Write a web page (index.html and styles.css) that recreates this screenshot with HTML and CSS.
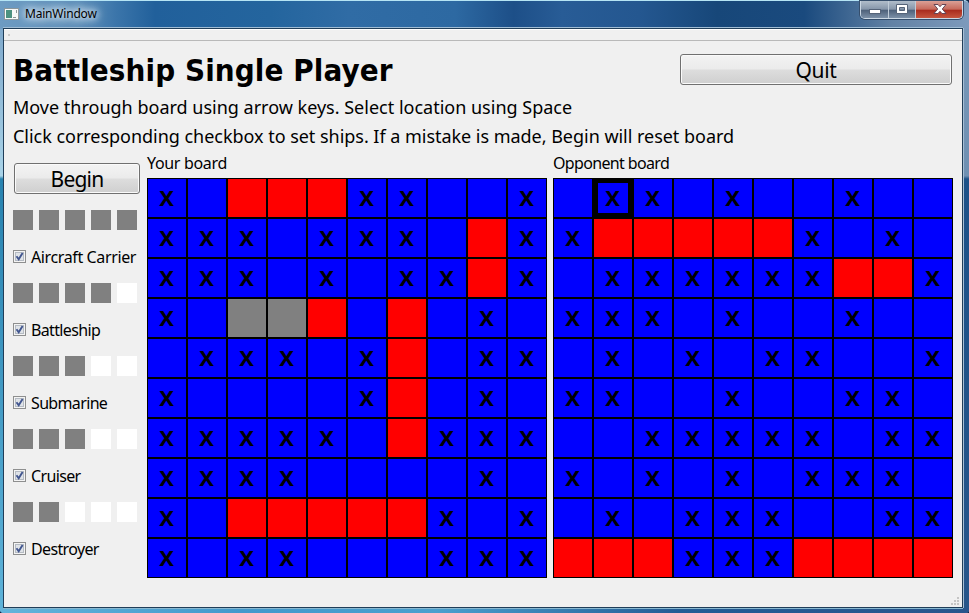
FILE: index.html
```
<!DOCTYPE html>
<html lang="en">
<head>
<meta charset="utf-8">
<title>MainWindow</title>
<link rel="stylesheet" href="styles.css">
</head>
<body>
<div class="window">
  <header class="titlebar">
    <svg class="app-icon" width="15" height="12" viewBox="0 0 15 12"><rect x=".5" y=".5" width="14" height="11" fill="#f7f9f8" stroke="#8b969a"/><rect x="2" y="2" width="6" height="8" fill="#4c9280"/><path d="M9 9.5h3M12.5 2v3" stroke="#8b9696"/></svg>
    <span class="window-name">MainWindow</span>
    <div class="controls">
      <span class="control minimize"><svg width="27" height="18"><rect x="8.5" y="9.5" width="11" height="4" fill="#fff" stroke="#566479"/></svg></span>
      <span class="control maximize"><svg width="26" height="18"><path fill-rule="evenodd" d="M7.500 4.500h11v9h-11zM10.500 7.500h5v3h-5z" fill="#fff" stroke="#566479"/></svg></span>
      <span class="control close"><svg width="47" height="18"><path d="M18 4.500h4l2 2.200 2-2.200h4l-3.700 4.500 3.700 4.500h-4l-2-2.200-2 2.200h-4l3.700-4.500z" fill="#fff" stroke="#664454"/></svg></span>
    </div>
  </header>
  <main class="client">
    <div class="toolbar"><i></i></div>
    <div class="content">
      <div class="heading"><h1>Battleship Single Player</h1><button class="quit">Quit</button></div>
      <p class="help">Move through board using arrow keys. Select location using Space</p>
      <p class="help click">Click corresponding checkbox to set ships. If a mistake is made, Begin will reset board</p>
      <div class="game">
        <aside class="fleet">
          <button class="begin">Begin</button>
          <div id="ships"></div>
        </aside>
        <section class="side own"><h2>Your board</h2><div class="board" id="own"></div></section>
        <section class="side opponent"><h2>Opponent board</h2><div class="board" id="opponent"></div></section>
      </div>
    </div>
    <svg class="grip" width="8" height="8"><path d="M6 0h2v2H6zM3 3h2v2H3zM6 3h2v2H6zM0 6h2v2H0zM3 6h2v2H3zM6 6h2v2H6z" fill="#c5c5c5"/></svg>
  </main>
</div>
<script src="game.js"></script>
</body>
</html>
```
FILE: styles.css
```
* { box-sizing: border-box; }
body { margin: 0; overflow: hidden; background: #10284b; color: #000; font-family: "Noto Sans", sans-serif; }
h1, h2, p { margin: 0; font-weight: normal; white-space: nowrap; }
.window {
  width: 969px; height: 613px; padding: 0 6px 5px 3px; display: flex; flex-direction: column;
  border-top: 1px solid #b5e4f4; border-radius: 0 5px 4px 4px;
  background:
    linear-gradient(90deg, #64b4da 0, #4399cc 25%, #4ba0ce 45%, #245c95 70%, #28558c) 0 100% / 100% 5px no-repeat,
    linear-gradient(180deg, #7898b8 0, #6f90b2 24%, #1d5288 24.5%, #28568a) 100% 28px / 6px 100% no-repeat,
    linear-gradient(180deg, #7fa9cc 0, #a9d3e8 24%, #2883b0 24.5%, #62b6dc) 0 28px / 3px 100% no-repeat,
    linear-gradient(90deg, #6d9bc2 0, #5f90ba 8%, #3b75aa 12%, #21609b 16%, #24659e 28%, #306ca5 36%, #2d69a2 47%, #1d4f88 53%, #285c96 58%, #245790 66%, #174779 74%, #1a4a7e 83%, #6282a5 92%, #7d9abc);
}
.titlebar { height: 27px; flex: none; display: flex; align-items: flex-start; }
.app-icon { margin: 7px 6px 0 1px; }
.window-name { margin-top: 5px; font-size: 12px; line-height: 15px; letter-spacing: -.2px; text-shadow: 0 0 7px #fff, 0 0 9px #dcecf8, 0 0 12px #dcecf8; }
.controls { display: flex; margin: 0 0 0 auto; width: 103px; height: 18px; border: 1px solid #cbd7e3; border-top: 0; border-radius: 0 0 5px 5px; overflow: hidden; box-shadow: 0 0 0 1px #354e6c; }
.control { display: block; height: 18px; }
.minimize, .maximize { background: linear-gradient(#b1bdca, #8696aa 46%, #4d6079 50%, #8296ad); border-right: 1px solid #c0ccd8; }
.minimize { width: 28px; }
.maximize { width: 27px; }
.close { width: 46px; background: linear-gradient(#dba096, #c7695b 46%, #a82b1d 50%, #c95b42); }
.control svg { display: block; margin-top: -1px; }
.client { position: relative; flex: 1; background: #f0f0f0; border: 1px solid #203e59; box-shadow: 0 -1px #a0bdd5, 1px 0 #a8bfd5, 0 1px #89b8d1; }
.toolbar { height: 12px; border-top: 1px solid #fff; border-bottom: 1px solid #b9b9b9; padding: 4px; }
.toolbar i { display: block; width: 2px; height: 2px; background: #cbcbcb; }
.content { padding: 13px 10px 0 9px; }
.heading { display: flex; justify-content: space-between; height: 39px; }
h1 { font: bold 31px/32px "DejaVu Sans Condensed", sans-serif; letter-spacing: .1px; }
button { display: block; font: 21px/31px "Noto Sans", sans-serif; text-align: center; color: #000; padding: 0; height: 31px; border: 1px solid #707070; border-radius: 3px; background: linear-gradient(#f3f3f3, #ebebeb 48%, #dddddd 52%, #cfcfcf); box-shadow: inset 0 0 0 1px #fafafa; letter-spacing: -.4px; }
.quit { width: 272px; }
.help { height: 29px; line-height: 29px; font-size: 18px; }
.click { letter-spacing: -.03px; }
.game { display: flex; margin: 2px -1px 0 0; }
.fleet { width: 134px; padding-top: 10px; flex: none; }
.begin { width: 126px; margin: 0 0 16px 1px; letter-spacing: -.8px; }
.ship { height: 73px; }
.blocks { display: flex; gap: 6px; height: 20px; }
.blocks i { width: 20px; background: #fff; }
.blocks .set { background: #808080; }
.ship label { display: flex; align-items: center; height: 21px; margin-top: 16px; font-size: 16px; line-height: 21px; letter-spacing: -.65px; white-space: nowrap; }
.ship label span { padding-top: 2px; }
.ship .carrier { letter-spacing: -.38px; }
.check { width: 13px; height: 13px; flex: none; margin-right: 5px; }
.side { width: 400px; flex: none; }
.opponent { margin-left: 6px; }
h2 { height: 25px; font-size: 16px; line-height: 20px; letter-spacing: -.32px; }
.opponent h2 { letter-spacing: -.65px; }
.board { display: grid; grid-template-columns: repeat(10, 40px); grid-auto-rows: 40px; }
.cell { display: flex; align-items: center; justify-content: center; border: 1px solid #000; background: #00f; font: bold 22px/28px "Noto Sans", sans-serif; padding: 0 1px 2px 0; }
.hit { background: #f00; }
.placed { background: #808080; }
.selected { border-width: 5px; }
.grip { position: absolute; right: 3px; bottom: 2px; }
```
FILE: game.js
```
const boards = {
  own: ["X.RRRXX..X", "XXX.XXX.RX", "XXX.X.XXRX", "X.GGR.R.X.", ".XXX.XR.XX", "X....XR.X.", "XXXXX.RXXX", "XXXX....X.", "X.RRRRRX.X", "X.XX...XXX"],
  opponent: [".SX.X..X..", "XRRRRRX.X.", ".XXXXXXRRX", "XXX.X..X..", ".X.X.XX..X", "XX..X..XX.", "..XXXXX.XX", "X.X.X.XXX.", ".X.XXX..XX", "RRRXXXRRRR"]
};
const kinds = { R: "hit", G: "placed", S: "selected" };
for (const [id, rows] of Object.entries(boards)) {
  document.getElementById(id).innerHTML = [...rows.join("")].map(c =>
    `<div class="cell ${kinds[c] || ""}">${c === "X" || c === "S" ? "X" : ""}</div>`).join("");
}
const ships = [["Aircraft Carrier", 5, "carrier"], ["Battleship", 4, "battleship"], ["Submarine", 3, "submarine"], ["Cruiser", 3, "cruiser"], ["Destroyer", 2, "destroyer"]];
const check = `<svg class="check" viewBox="0 0 13 13"><rect x=".5" y=".5" width="12" height="12" fill="#f4f4f4" stroke="#8e8f8f"/><rect x="2.500" y="2.500" width="8" height="8" fill="#dfe3e8" stroke="#b5bbc3"/><path d="M3.500 6.200l2.200 3L9.600 3" fill="none" stroke="#42568f" stroke-width="1.900"/></svg>`;
document.getElementById("ships").innerHTML = ships.map(([name, size, key]) =>
  `<div class="ship"><div class="blocks">${[0, 1, 2, 3, 4].map(i => `<i class="${i < size ? "set" : ""}"></i>`).join("")}</div><label>${check}<span class="${key}">${name}</span></label></div>`).join("");
```
